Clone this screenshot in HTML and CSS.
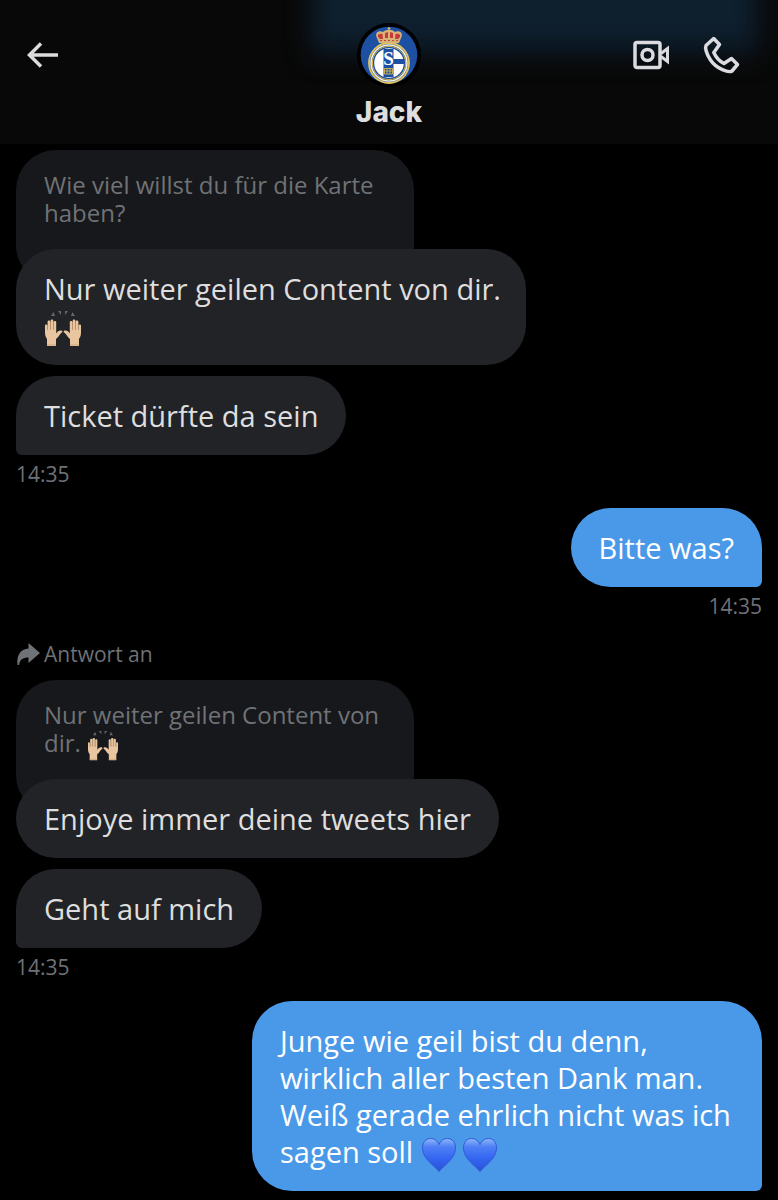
FILE: index.html
```html
<!DOCTYPE html>
<html lang="de">
<head>
  <meta charset="UTF-8" />
  <meta name="viewport" content="width=device-width, initial-scale=1.0"/>
  <title>Jack</title>
  <link rel="stylesheet" href="styles.css">
</head>
<body>
  <!-- shared emoji drawings -->
  <svg class="defs" aria-hidden="true">
    <defs>
      <linearGradient id="heartFill" x1="0" y1="0" x2="0" y2="1">
        <stop offset="0" stop-color="#8fb8fb"/>
        <stop offset="0.25" stop-color="#4f80f5"/>
        <stop offset="0.6" stop-color="#3466f2"/>
        <stop offset="1" stop-color="#2a50d8"/>
      </linearGradient>
      <symbol id="heart" viewBox="0 0 36 36">
        <path d="M18 34.500C14 29 2 22.500 1.500 11.500C1.200 5 5 1.500 9.500 1.500C13.500 1.500 16.500 4 18 7.500C19.500 4 22.500 1.500 26.500 1.500C31 1.500 34.800 5 34.500 11.500C34 22.500 22 29 18 34.500Z" fill="url(#heartFill)" stroke="#3159d8" stroke-width="1"/>
      </symbol>
      <symbol id="hand" viewBox="0 0 19 28">
        <path d="M3 27V20C1 17.500 1 15 1 12V6.500C1 5 3.300 5 3.300 6.500V11H3.600V2.500C3.600 1 6.300 1 6.300 2.500V10.500H6.600V1.500C6.600 0 9.300 0 9.300 1.500V10.500H9.600V3C9.600 1.500 12.200 1.500 12.200 3V14.500C13.500 12 15.500 11 17.500 11.500C18.800 12 18.600 13.200 17.500 13.800C15.500 15 15 18 12 20V27Z" fill="#e9c6a0"/>
        <path d="M3.500 6V11M6.500 3V11M9.500 3V11M3 26H12" stroke="#bd9167" stroke-width="0.600" fill="none"/>
      </symbol>
      <symbol id="hands" viewBox="0 0 38 36">
        <use href="#hand" x="0" y="8" width="19" height="28"/>
        <use href="#hand" x="0" y="8" width="19" height="28" transform="translate(38 0) scale(-1 1)"/>
        <path d="M7 5L9.500 1L11 5ZM14 0H17V4ZM24 0H21V4ZM31 5L28.500 1L27 5Z" fill="#66676b"/>
      </symbol>
    </defs>
  </svg>

  <header class="topbar">
    <div class="topbar-left">
      <button class="icon-btn" aria-label="Zurück">
        <svg width="32" height="28" viewBox="0 0 32 28" fill="none" stroke="#dcdcdc" stroke-width="3.500">
          <path d="M31 14H2.500M14 2.500L2.500 14L14 25.500"/>
        </svg>
      </button>
    </div>

    <div class="contact">
      <svg class="avatar" viewBox="0 0 64 64" role="img" aria-label="Profilbild">
        <circle cx="32" cy="32" r="32" fill="#000"/>
        <circle cx="32" cy="32" r="28.300" fill="#1d4fa3"/>
        <circle cx="32" cy="40" r="20" fill="#1d4fa3" stroke="#e3c35c" stroke-width="1.800"/>
        <circle cx="32" cy="40" r="18" fill="#1d4fa3" stroke="#f3efdc" stroke-width="1.600"/>
        <circle cx="32" cy="40" r="16.600" fill="#1d4fa3" stroke="#d9b548" stroke-width="1"/>
        <circle cx="32" cy="40" r="14.800" fill="#fff"/>
        <path d="M26.500 26H36.500V36H47V41H36.500V54H26.500Z" fill="#1d4fa3"/>
        <text class="crest-letter" x="31.500" y="42" text-anchor="middle">S</text>
        <path d="M27.500 45.500H35.500V51H27.500ZM30 45V51M33 45V51M28 48H35" fill="none" stroke="#c6ae55" stroke-width="1"/>
        <path d="M20 15C17 10 22 7 26 9C29 6 35 6 38 9C42 7 47 10 44 15L42 20H22Z" fill="#d8b276"/>
        <path d="M21 14C20 11 23 10 25.500 11L26 16H23ZM28 10L31 9V15H28ZM33 9L36 10V15H33ZM43 14C44 11 41 10 38.500 11L38 16H41Z" fill="#c63a3a"/>
        <path d="M23 17.500H41" stroke="#b5493f" stroke-width="1.200" stroke-dasharray="2 2"/>
        <path d="M32 4V9M30.500 5.500H33.500" stroke="#e0bd63" stroke-width="1.200"/>
      </svg>
      <h1>Jack</h1>
    </div>

    <div class="topbar-right">
      <button class="icon-btn" aria-label="Videoanruf">
        <svg width="37" height="30" viewBox="0 0 37 30" fill="none" stroke="#dcdce0" stroke-width="3.500">
          <rect x="2" y="2.500" width="25" height="25" rx="2"/>
          <circle cx="14.500" cy="15" r="5.500"/>
          <path d="M28 13.500L34.500 8.500V21.500L28 16.500" stroke-width="3"/>
        </svg>
      </button>
      <button class="icon-btn" aria-label="Anruf">
        <svg width="38" height="40" viewBox="0 0 38 40" fill="none" stroke="#dcdce0" stroke-width="3.500" stroke-linejoin="round">
          <path d="M10.700 3.500L16.500 9.500L10.800 17.500C13 22.500 16 26 21 28.500L28.500 23.500L34.500 29.500L29 36C26 38 13.500 34 7.500 25C3 18.500 2 12.500 3 10.500Z"/>
        </svg>
      </button>
    </div>
  </header>

  <main class="chat">
    <section class="group">
      <div class="quote">Wie viel willst du für die Karte haben?</div>
      <div class="bubble"><span class="nowrap">Nur weiter geilen Content von dir.</span> <svg class="emoji" role="img" aria-label="🙌🏼"><use href="#hands"/></svg></div>
      <div class="bubble tail">Ticket dürfte da sein</div>
      <time>14:35</time>
    </section>

    <section class="group own">
      <div class="bubble tail">Bitte was?</div>
      <time>14:35</time>
    </section>

    <section class="group">
      <div class="reply-to">
        <svg width="24" height="24" viewBox="0 0 24 24" aria-hidden="true">
          <path d="M12.500 1L24 11L12.500 21V15.500C6.500 15.500 4 17.500 3 23H1.500C0.500 13 4.500 7 12.500 6.500Z" fill="#6f7276"/>
        </svg>
        <span>Antwort an</span>
      </div>
      <div class="quote">Nur weiter geilen Content von dir. <svg class="emoji" role="img" aria-label="🙌🏼"><use href="#hands"/></svg></div>
      <div class="bubble">Enjoye immer deine tweets hier</div>
      <div class="bubble tail">Geht auf mich</div>
      <time>14:35</time>
    </section>

    <section class="group own">
      <div class="bubble tail">Junge wie geil bist du denn, wirklich aller besten Dank man. Weiß gerade ehrlich nicht was ich sagen soll <svg class="emoji heart" role="img" aria-label="💙"><use href="#heart"/></svg><svg class="emoji heart" role="img" aria-label="💙"><use href="#heart"/></svg></div>
    </section>
  </main>
</body>
</html>
```
FILE: styles.css
```css
:root {
  --bg-color: #000;
  --bar-color: #080808;
  --bubble: #222327;
  --quote: #17181b;
  --own: #4a99e9;
  --text-color: #dedede;
  --muted: #6f7276;
}

* {
  box-sizing: border-box;
}

body {
  margin: 0;
  background: var(--bg-color);
  color: var(--text-color);
  font-family: 'Open Sans', 'Noto Sans', sans-serif;
  font-size: 29px;
  line-height: 37px;
}

.defs {
  position: absolute;
  width: 0;
  height: 0;
}

.topbar {
  position: relative;
  display: grid;
  grid-template-columns: 1fr auto 1fr;
  padding: 23px 37px 13px 27px;
  background: var(--bar-color);
  overflow: hidden;
}

/* message shining through behind the bar */
.topbar::before {
  content: "";
  position: absolute;
  top: -60px;
  left: 40%;
  right: 20px;
  height: 116px;
  background: linear-gradient(#0e1f2e 80%, #0b1620);
  filter: blur(12px);
}

.topbar-left,
.topbar-right {
  position: relative;
  display: flex;
  align-items: center;
  height: 64px;
}

.topbar-right {
  justify-content: flex-end;
  gap: 33px;
}

.icon-btn {
  padding: 0;
  border: 0;
  background: none;
  cursor: pointer;
}

.icon-btn svg {
  display: block;
}

.contact {
  position: relative;
  display: flex;
  flex-direction: column;
  align-items: center;
  margin-right: -10px;
}

.avatar {
  width: 64px;
  height: 64px;
}

.crest-letter {
  font: bold 19px 'Liberation Serif', serif;
  fill: #fff;
}

h1 {
  margin: 7px 0 0;
  font-family: Inter, sans-serif;
  font-size: 28px;
  font-weight: 800;
  line-height: 37px;
}

.chat {
  display: flex;
  flex-direction: column;
  gap: 20px;
  padding: 6px 16px 8px;
}

.group {
  display: flex;
  flex-direction: column;
  align-items: flex-start;
}

.own {
  align-items: flex-end;
}

.bubble {
  position: relative;
  max-width: 510px;
  padding: 21px 28px;
  border-radius: 40px;
  background: var(--bubble);
}

.bubble + .bubble {
  margin-top: 11px;
}

.tail {
  border-bottom-left-radius: 6px;
}

.own .bubble {
  background: var(--own);
  color: #fff;
}

.own .tail {
  border-bottom-left-radius: 40px;
  border-bottom-right-radius: 6px;
}

.nowrap {
  white-space: nowrap;
}

/* the quoted message runs on behind the answer */
.quote {
  max-width: 398px;
  margin-bottom: -36px;
  padding: 21px 28px 58px;
  border-radius: 40px;
  background: var(--quote);
  color: var(--muted);
  font-size: 24px;
  line-height: 28px;
}

.emoji {
  width: 38px;
  height: 36px;
  margin-top: -6px;
  margin-bottom: -6px;
  vertical-align: middle;
}

.quote .emoji {
  width: 32px;
  height: 30px;
}

.heart {
  width: 36px;
  margin-right: 5px;
}

time {
  margin-top: 5px;
  color: var(--muted);
  font-size: 21px;
  line-height: 28px;
}

.reply-to {
  display: flex;
  align-items: center;
  gap: 4px;
  margin-bottom: 12px;
  color: var(--muted);
  font-size: 21px;
  line-height: 28px;
}
```
